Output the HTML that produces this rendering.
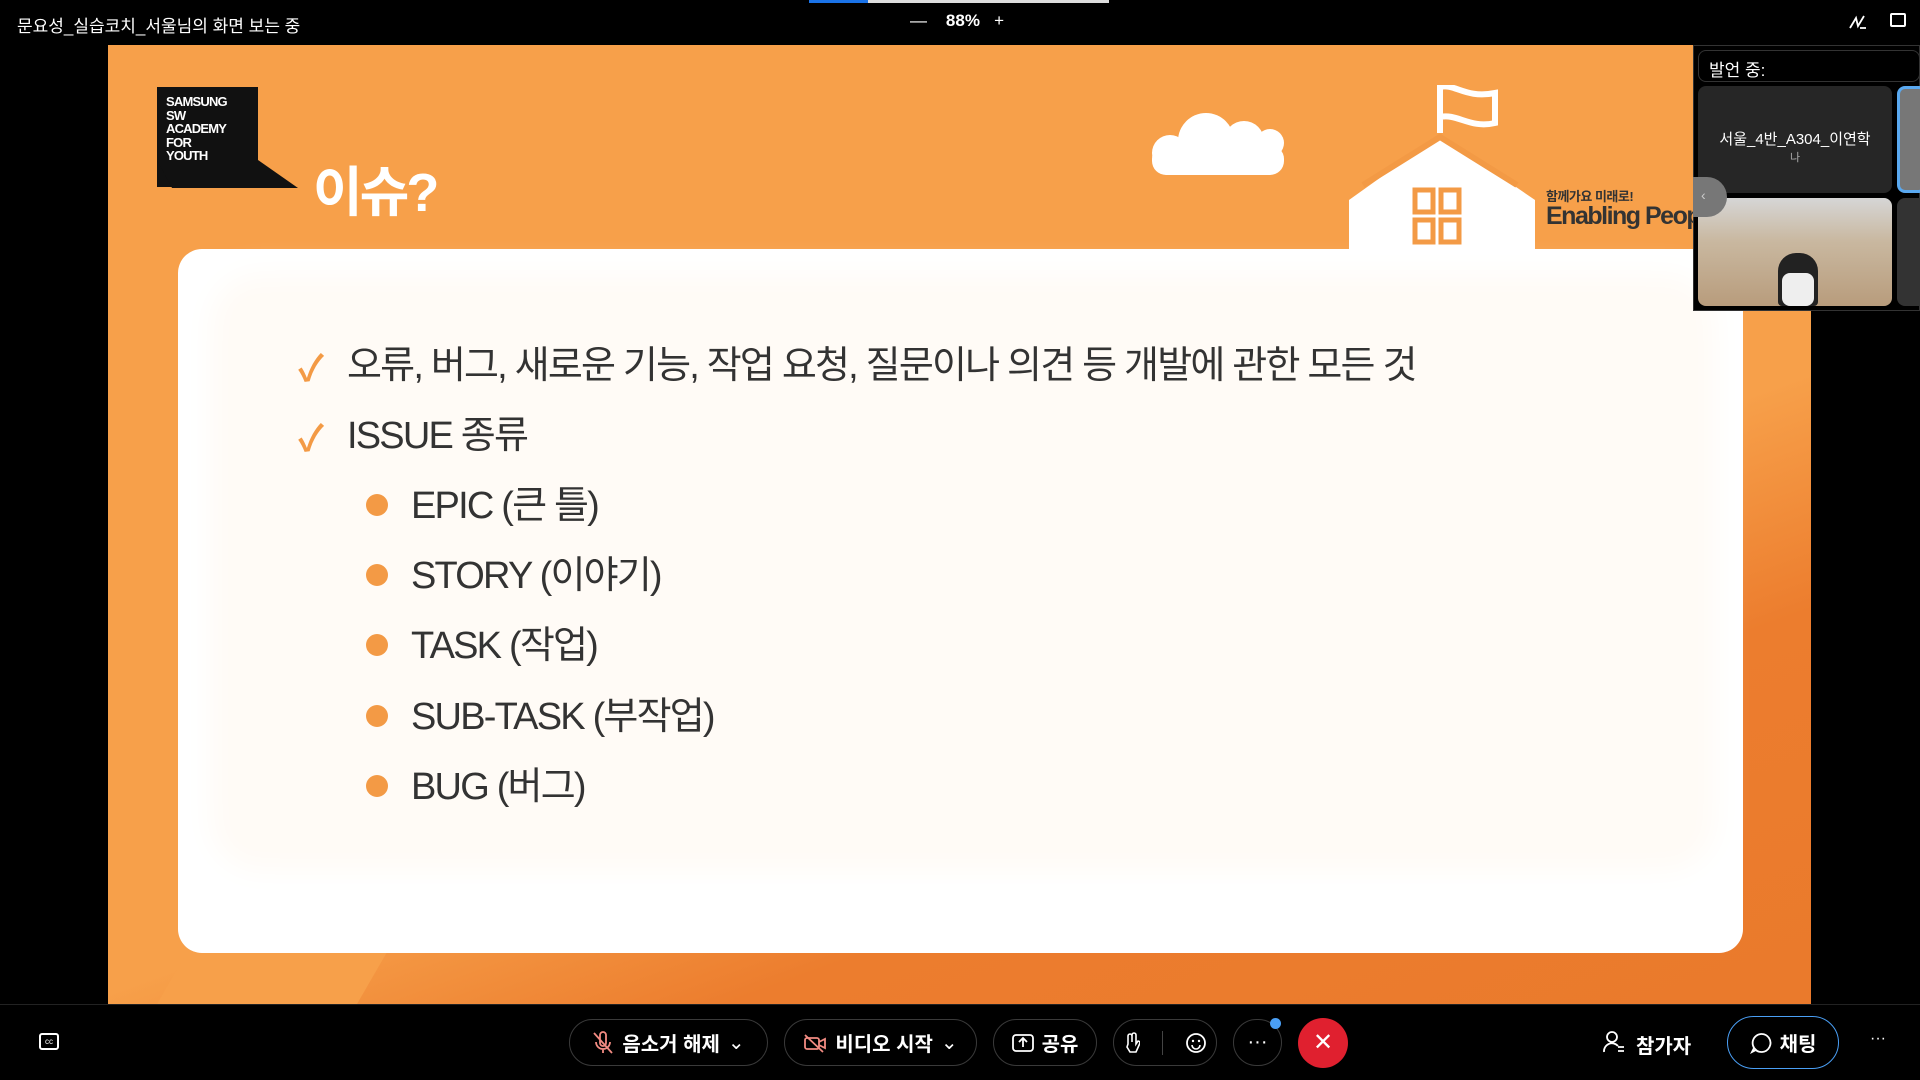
<!DOCTYPE html>
<html><head><meta charset="utf-8"><style>
*{margin:0;padding:0;box-sizing:border-box}
body{width:1920px;height:1080px;background:#000;position:relative;overflow:hidden;font-family:"Liberation Sans","Noto Sans CJK KR",sans-serif;color:#fff}
.a{position:absolute}
.pill{position:absolute;top:1019px;height:47px;border:1.5px solid #3a3a3a;border-radius:24px;display:flex;align-items:center;justify-content:center;font-size:20px;font-weight:bold;gap:8px}
.li{position:absolute;left:411px;font-size:38px;color:#333;letter-spacing:-1.8px;line-height:1}
.dot{position:absolute;left:366px;width:22px;height:22px;border-radius:50%;background:#f39a45}
.chk{position:absolute;left:298px;color:#f39a45;font-size:36px;font-weight:bold}
</style></head><body>
<div class="a" style="left:809px;top:0;width:59px;height:3px;background:#1a73e8"></div>
<div class="a" style="left:868px;top:0;width:241px;height:3px;background:#ddd"></div>
<div class="a" style="left:17px;top:12px;font-size:17px">문요성_실습코치_서울님의 화면 보는 중</div>
<div class="a" style="left:910px;top:11px;font-size:17px">—&nbsp;&nbsp;&nbsp; <b>88%</b> &nbsp;&nbsp;+</div>
<svg class="a" style="left:1848px;top:12px" width="20" height="20"><path d="M2 16 L8 6 L10 14 L16 4 M12 16 L18 16" fill="none" stroke="#fff" stroke-width="1.8"/></svg>
<div class="a" style="left:1890px;top:13px;width:16px;height:14px;border:2px solid #fff;border-radius:2px"></div>

<div class="a" style="left:108px;top:45px;width:1703px;height:959px;background:linear-gradient(160deg,#f7a04a 0%,#f7a04a 60%,#ec7d2e 75%,#ea7a2c 100%);overflow:hidden">
  <div class="a" style="left:60px;top:840px;width:200px;height:200px;background:#f7a04a;transform:skewX(-30deg)"></div>
</div>
<div class="a" style="left:157px;top:87px;width:101px;height:100px;background:#111"></div>
<svg class="a" style="left:157px;top:160px" width="142" height="30"><polygon points="0,0 101,0 141,28 15,28" fill="#111"/></svg>
<div class="a" style="left:166px;top:95px;font-size:13px;font-weight:bold;line-height:13.5px;letter-spacing:-0.8px">SAMSUNG<br>SW<br>ACADEMY<br>FOR<br>YOUTH</div>
<div class="a" style="left:313px;top:148px;font-size:54px;font-weight:bold;letter-spacing:-3px">이슈?</div>
<svg class="a" style="left:1148px;top:105px" width="160" height="70"><g fill="#fff"><circle cx="58" cy="36" r="28"/><circle cx="96" cy="36" r="20"/><circle cx="22" cy="48" r="18"/><circle cx="122" cy="38" r="14"/><rect x="4" y="40" width="132" height="30" rx="14"/></g></svg>
<svg class="a" style="left:1345px;top:85px" width="190" height="175"><path d="M95 48 V2 C110 -2 120 14 150 8 V38 C125 44 112 28 95 32" fill="none" stroke="#fff" stroke-width="6"/><polygon points="95,50 190,115 190,175 4,175 4,115" fill="#fff"/><polyline points="18,100 95,52 172,100" fill="none" stroke="#f39a45" stroke-width="6"/><g fill="none" stroke="#f39a45" stroke-width="5"><rect x="70" y="105" width="18" height="22"/><rect x="96" y="105" width="18" height="22"/><rect x="70" y="135" width="18" height="22"/><rect x="96" y="135" width="18" height="22"/></g></svg>
<div class="a" style="left:1546px;top:186px;font-size:13px;color:#333;font-weight:bold;letter-spacing:-0.5px">함께가요 미래로!</div>
<div class="a" style="left:1546px;top:202px;font-size:25px;color:#333;font-weight:bold;letter-spacing:-1.5px;white-space:nowrap;width:147px;overflow:hidden">Enabling People</div>

<div class="a" style="left:178px;top:249px;width:1565px;height:704px;background:#fff;border-radius:24px"></div>
<div class="a" style="left:230px;top:294px;width:1466px;height:557px;background:#fffbf6;border-radius:30px;box-shadow:0 0 30px 20px #fffbf6"></div>
<div class="chk" style="top:340px">✓</div>
<div class="li" style="left:347px;top:347px">오류, 버그, 새로운 기능, 작업 요청, 질문이나 의견 등 개발에 관한 모든 것</div>
<div class="chk" style="top:410px">✓</div>
<div class="li" style="left:347px;top:417px">ISSUE 종류</div>
<div class="dot" style="top:494px"></div><div class="li" style="top:487px">EPIC (큰 틀)</div>
<div class="dot" style="top:564px"></div><div class="li" style="top:557px">STORY (이야기)</div>
<div class="dot" style="top:634px"></div><div class="li" style="top:627px">TASK (작업)</div>
<div class="dot" style="top:705px"></div><div class="li" style="top:698px">SUB-TASK (부작업)</div>
<div class="dot" style="top:775px"></div><div class="li" style="top:768px">BUG (버그)</div>

<div class="a" style="left:1693px;top:45px;width:227px;height:266px;background:#000;border:1px solid #333"></div>
<div class="a" style="left:1698px;top:50px;width:222px;height:32px;border:1px solid #333;border-radius:8px;font-size:17px;padding:5px 10px">발언 중:</div>
<div class="a" style="left:1698px;top:86px;width:194px;height:107px;background:#262626;border-radius:8px;text-align:center;font-size:15px;padding-top:42px">서울_4반_A304_이연학<div style="font-size:11px;color:#aaa">나</div></div>
<div class="a" style="left:1897px;top:86px;width:30px;height:107px;border:3px solid #5aa9f0;border-radius:8px;background:#777"></div>
<div class="a" style="left:1698px;top:198px;width:194px;height:108px;border-radius:8px;background:linear-gradient(#d6d6d6 0%,#c9b8a0 40%,#b89c7c 100%)"><div class="a" style="left:80px;top:55px;width:40px;height:53px;background:#222;border-radius:18px 18px 4px 4px"></div><div class="a" style="left:84px;top:75px;width:32px;height:33px;background:#eee;border-radius:8px"></div></div>
<div class="a" style="left:1897px;top:198px;width:30px;height:108px;background:#333;border-radius:8px"></div>
<div class="a" style="left:1693px;top:177px;width:34px;height:40px;background:#777;border-radius:0 20px 20px 0;color:#ccc;font-size:14px;padding:10px 8px">‹</div>

<div class="a" style="left:0;top:1004px;width:1920px;height:1px;background:#222"></div>
<div class="a" style="left:39px;top:1033px;width:20px;height:17px;border:2px solid #fff;border-radius:3px;font-size:8px;text-align:center;line-height:13px">cc</div>
<div class="pill" style="left:569px;width:199px"><svg width="22" height="24"><path d="M8 4 a3 3 0 0 1 6 0 v8 a3 3 0 0 1 -6 0z M4 11 a7 7 0 0 0 14 0 M11 18 v4 M2 2 L20 22" fill="none" stroke="#f28b82" stroke-width="1.8"/></svg>음소거 해제 <span style="font-weight:normal">⌄</span></div>
<div class="pill" style="left:784px;width:193px"><svg width="24" height="20"><rect x="2" y="5" width="14" height="11" rx="2" fill="none" stroke="#f28b82" stroke-width="1.8"/><path d="M16 9 L22 6 V15 L16 12 M2 2 L20 19" fill="none" stroke="#f28b82" stroke-width="1.8"/></svg>비디오 시작 <span style="font-weight:normal">⌄</span></div>
<div class="pill" style="left:993px;width:104px"><svg width="22" height="20"><rect x="1" y="2" width="20" height="16" rx="3" fill="none" stroke="#fff" stroke-width="1.8"/><path d="M11 14 V6 M7 9 L11 5 L15 9" fill="none" stroke="#fff" stroke-width="1.8"/></svg>공유</div>
<div class="pill" style="left:1113px;width:104px;gap:22px"><svg width="16" height="22"><path d="M4 12 V4 a2 2 0 0 1 4 0 V10 V3 a2 2 0 0 1 4 0 V12 l2-3 a2 2 0 0 1 2 2 L12 20 H6 L3 15z" fill="none" stroke="#fff" stroke-width="1.6"/></svg><span style="width:1px;height:24px;background:#444"></span><svg width="22" height="22"><circle cx="11" cy="11" r="9" fill="none" stroke="#fff" stroke-width="1.8"/><path d="M7 13 a4 4 0 0 0 8 0" fill="none" stroke="#fff" stroke-width="1.6"/><circle cx="8" cy="9" r="1.2" fill="#fff"/><circle cx="14" cy="9" r="1.2" fill="#fff"/></svg></div>
<div class="pill" style="left:1233px;width:49px;font-weight:normal">···</div>
<div class="a" style="left:1270px;top:1018px;width:11px;height:11px;border-radius:50%;background:#4a9ff5"></div>
<div class="a" style="left:1298px;top:1018px;width:50px;height:50px;border-radius:50%;background:#e0202f;text-align:center;line-height:50px;font-size:24px">✕</div>
<svg class="a" style="left:1602px;top:1030px" width="24" height="24"><circle cx="10" cy="7" r="5" fill="none" stroke="#fff" stroke-width="1.8"/><path d="M2 22 a8 8 0 0 1 14 -6 M16 17 h6 M16 21 h6" fill="none" stroke="#fff" stroke-width="1.8"/></svg>
<div class="a" style="left:1636px;top:1030px;font-size:20px;font-weight:bold">참가자</div>
<div class="a" style="left:1727px;top:1016px;width:112px;height:53px;border:1.5px solid #4a9ff5;border-radius:27px;font-size:20px;font-weight:bold;display:flex;align-items:center;justify-content:center;gap:8px"><svg width="22" height="22"><path d="M11 2 a9 9 0 1 1 -7 14 L2 20 L6 18 A9 9 0 0 1 11 2z" fill="none" stroke="#fff" stroke-width="1.8"/></svg>채팅</div>
<div class="a" style="left:1870px;top:1030px;font-size:16px">···</div>
</body></html>
